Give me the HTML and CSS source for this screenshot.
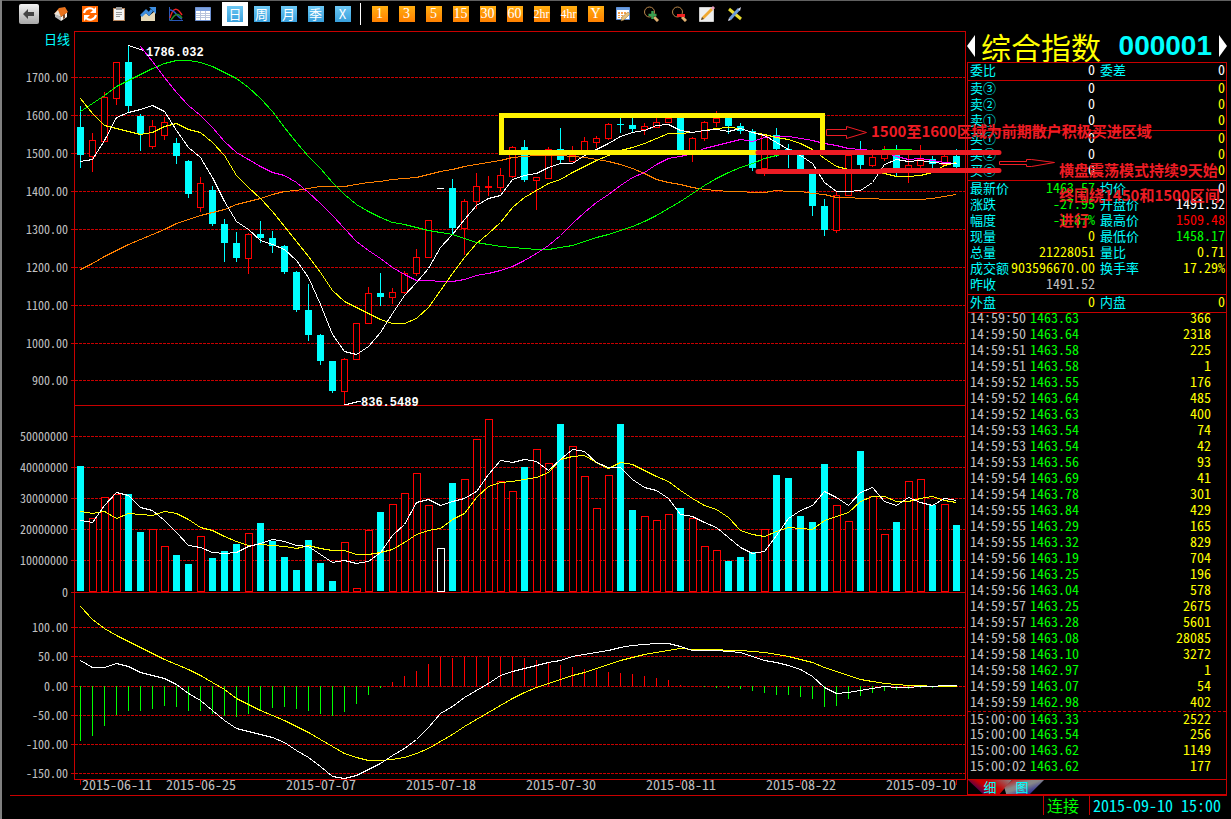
FILE: index.html
```html
<!DOCTYPE html>
<html lang="zh-CN">
<head>
<meta charset="utf-8">
<title>综合指数 000001</title>
<link rel="stylesheet" href="styles.css">
</head>
<body class="app">
<header class="toolbar">
  <button class="back" aria-label="返回"><svg width="12" height="10" viewBox="0 0 12 10"><path d="M0 5 5 0V3H11V7H5V10Z" fill="#444"/></svg></button>
  <button class="tool wide" aria-label="主页"><svg width="16" height="16" viewBox="0 0 16 16"><path d="M2 8 8 11V15L2 11Z" fill="#bbb"/><path d="M8 11 14 6V11L8 15Z" fill="#f5efe6"/><path d="M1 8 6 2 12 1 15 6 8 11 5 6Z" fill="#e8721c"/><path d="M1 8 5 4 8 11Z" fill="#e9e2d8"/><path d="M10 9 12 8V12L10 13Z" fill="#7b4a2a"/></svg></button>
  <button class="tool wide" aria-label="刷新"><svg width="16" height="16" viewBox="0 0 16 16"><path d="M0 0H16V16H0Z" fill="#f60"/><path d="M2 7C3 2 9 1 12 4M14 9C13 14 7 15 4 12" fill="none" stroke="#fff" stroke-width="2"/><path d="M14 1V7H8ZM2 15V9H8Z" fill="#fff"/></svg></button>
  <button class="tool wide" aria-label="剪贴板"><svg width="14" height="16" viewBox="0 0 14 16"><path d="M1 2H13V15H1Z" fill="#b5835a"/><path d="M2 3H12V14H2Z" fill="#f4f4f4"/><path d="M4 1H10V4H4Z" fill="#999"/><path d="M4 6.500H10M4 8.500H10M4 10.500H8" stroke="#999"/></svg></button>
  <button class="tool wide" aria-label="走势"><svg width="16" height="16" viewBox="0 0 16 16"><path d="M1 10 6 7 9 10 15 5V15H1Z" fill="#e6d9b8"/><path d="M1 10 6 5 9 8 12 4" fill="none" stroke="#3d8de0" stroke-width="3"/><path d="M9 1H16V8Z" fill="#3d8de0"/></svg></button>
  <button class="tool" aria-label="指标"><svg width="16" height="16" viewBox="0 0 16 16"><path d="M1.500 1V14.500H15" fill="none" stroke="#2958b8"/><path d="M2 12C5 1 9 1 14 9" fill="none" stroke="#e22" stroke-width="1.500"/><path d="M2 4C7 4 9 11 14 13" fill="none" stroke="#2857c8" stroke-width="1.500"/><path d="M3 14C7 8 10 6 14 12" fill="none" stroke="#2a8a2a" stroke-width="1.500"/></svg></button>
  <button class="tool" aria-label="列表"><svg width="16" height="14" viewBox="0 0 16 14"><path d="M.5.5H15.500V13.500H.5Z" fill="#fff" stroke="#6b8fd0"/><path d="M1 1H15V4H1Z" fill="#7ea2e0"/><path d="M1 6.500H15M1 8.500H15M1 10.500H15M5.500 4V13M10.500 4V13" stroke="#b8c4dc"/></svg></button>
  <button class="tool selected"><span class="key blue">日</span></button>
  <button class="tool"><span class="key blue">周</span></button>
  <button class="tool"><span class="key blue">月</span></button>
  <button class="tool"><span class="key blue">季</span></button>
  <button class="tool"><span class="key blue">X</span></button>
  <span class="separator"></span>
  <button class="tool"><span class="key orange">1</span></button>
  <button class="tool"><span class="key orange">3</span></button>
  <button class="tool"><span class="key orange">5</span></button>
  <button class="tool"><span class="key orange">15</span></button>
  <button class="tool"><span class="key orange">30</span></button>
  <button class="tool"><span class="key orange">60</span></button>
  <button class="tool"><span class="key orange small">2hr</span></button>
  <button class="tool"><span class="key orange small">4hr</span></button>
  <button class="tool"><span class="key orange">Y</span></button>
  <button class="tool mid" aria-label="编辑表"><svg width="16" height="16" viewBox="0 0 16 16"><path d="M1.500 1.500H14.500V13.500H1.500Z" fill="#fff" stroke="#5b8fd8"/><path d="M2 2H14V4H2Z" fill="#6a9ce0"/><path d="M3 6H11V12H3Z" fill="#f6a04c"/><path d="M3 8.500H11M3 10.500H11M5.500 6V12M8.500 6V12" stroke="#fff"/><path d="M6 15 7 11 13 6 15 8 9 14Z" fill="#e8c27a" stroke="#8a6a3a" stroke-width=".5"/></svg></button>
  <button class="tool mid" aria-label="放大"><svg width="16" height="16" viewBox="0 0 16 16"><circle cx="6.500" cy="6" r="5" fill="none" stroke="#b8864a"/><path d="M11 11 15 15" stroke="#e0b070" stroke-width="3"/><path d="M9.500 5V13M5.500 9H13.500" stroke="#3aa050" stroke-width="2.500"/></svg></button>
  <button class="tool mid" aria-label="缩小"><svg width="16" height="16" viewBox="0 0 16 16"><circle cx="6.500" cy="6" r="5" fill="none" stroke="#b8864a"/><path d="M11 11 15 15" stroke="#e0b070" stroke-width="3"/><path d="M6 9.500H14" stroke="#e22" stroke-width="3"/></svg></button>
  <button class="tool mid" aria-label="画线"><svg width="16" height="16" viewBox="0 0 16 16"><path d="M.5 1.500H14.500V15.500H.5Z" fill="#eee" stroke="#ccc"/><path d="M2 14 3 11 12 2 14 4 5 13Z" fill="#f0a830"/><path d="M12 2 14 0 16 2 14 4Z" fill="#e8a0c0"/><path d="M2 14 3 11 5 13Z" fill="#543"/></svg></button>
  <button class="tool mid" aria-label="工具"><svg width="14" height="16" viewBox="0 0 14 16"><path d="M1 3 13 13" stroke="#e8dc30" stroke-width="3"/><path d="M2 13 11 3" stroke="#6a9ad8" stroke-width="3"/><path d="M0 15 1 12 3 14ZM10 3 13 1 12 5Z" fill="#dde"/></svg></button>
</header>

<main class="workspace">
  <section class="chart" aria-label="日线图">
    <svg class="plot" id="plot" viewBox="2 30 965 766"></svg>
    <svg class="notes" viewBox="2 30 965 766">
      <rect class="zone" x="501.500" y="115.500" width="321" height="37"/>
      <path class="band" d="M758 152.500H999M758 171.500H880L884 170.500H999"/>
      <path class="arrow" d="M826.500 129.500H846.500V126.500L866.500 132.500 846.500 138.500V135.500H826.500Z"/>
      <path class="arrow" d="M999.500 161.500H1026.500V159.500H1031.500L1054.500 162.500 1031.500 166.500H1026.500V164.500H999.500Z"/>
      <text class="note" x="871" y="137">1500至1600区域为前期散户积极买进区域</text>
      <text class="note" x="1059" y="176">横盘震荡模式持续9天始</text>
      <text class="note" x="1059" y="201">终围绕1450和1500区间</text>
      <text class="note" x="1059" y="226">进行</text>
    </svg>
  </section>

  <aside class="quote">
    <div class="title">
      <button class="step" aria-label="上一个"><svg width="8" height="22" viewBox="0 0 8 22"><path d="M8 0V22L0 11Z" fill="#fff"/></svg></button>
      <h1 class="name">综合指数</h1><span class="code">000001</span>
      <button class="step" aria-label="下一个"><svg width="8" height="22" viewBox="0 0 8 22"><path d="M0 0V22L8 11Z" fill="#fff"/></svg></button>
    </div>
    <div class="frame">
      <table class="pairs">
        <tbody class="single"><tr><th>委比</th><td>0</td><th>委差</th><td>0</td></tr></tbody>
      </table>
      <table class="pairs">
        <tbody><tr><th>卖③</th><td>0</td><th></th><td class="y">0</td></tr>
        <tr><th>卖②</th><td>0</td><th></th><td class="y">0</td></tr>
        <tr><th>卖①</th><td>0</td><th></th><td class="y">0</td></tr></tbody>
      </table>
      <table class="pairs">
        <tbody><tr><th>买①</th><td>0</td><th></th><td class="y">0</td></tr>
        <tr><th>买②</th><td>0</td><th></th><td class="y">0</td></tr>
        <tr><th>买③</th><td>0</td><th></th><td class="y">0</td></tr></tbody>
      </table>
      <table class="pairs">
        <tbody><tr><th>最新价</th><td class="g">1463.57</td><th>均价</th><td>0</td></tr>
        <tr><th>涨跌</th><td class="g">-27.95</td><th>开盘价</th><td>1491.52</td></tr>
        <tr><th>幅度</th><td class="g">-1.87%</td><th>最高价</th><td class="r">1509.48</td></tr>
        <tr><th>现量</th><td class="y">0</td><th>最低价</th><td class="g">1458.17</td></tr>
        <tr><th>总量</th><td class="y">21228051</td><th>量比</th><td class="y">0.71</td></tr>
        <tr><th>成交额</th><td class="y">903596670.00</td><th>换手率</th><td class="y">17.29%</td></tr>
        <tr><th>昨收</th><td class="s">1491.52</td><th></th><td></td></tr></tbody>
      </table>
      <table class="pairs">
        <tbody class="single"><tr><th>外盘</th><td class="y">0</td><th>内盘</th><td class="y">0</td></tr></tbody>
      </table>
      <div class="ticks"><table class="trades"><tbody id="trades"></tbody></table></div>
      <div class="tabs"><button class="tab first">细</button><button class="tab second">图</button></div>
    </div>
  </aside>
</main>

<footer class="status"><span class="link">连接</span><time class="clock">2015-09-10 15:00</time></footer>
<script src="chart.js"></script>
</body>
</html>
```
FILE: styles.css
```css
* { box-sizing: border-box; }

.app {
  margin: 0;
  min-height: 100vh;
  display: flex;
  flex-direction: column;
  background: #000;
  border-left: 2px solid #808080;
  color: #fff;
  font-family: "Noto Sans CJK SC", sans-serif;
  font-feature-settings: "hwid";
  font-size: 14px;
  overflow-x: hidden;
}

button {
  margin: 0;
  padding: 0;
  border: 0;
  background: none;
  color: inherit;
  font: inherit;
}

/* toolbar */
.toolbar {
  display: flex;
  align-items: center;
  height: 30px;
  padding: 0 0 3px 17px;
  border-top: 1px solid #606060;
}
.toolbar svg { display: block; }
.back {
  display: flex;
  align-items: center;
  justify-content: center;
  width: 20px;
  height: 20px;
  margin-right: 7px;
  border-radius: 2px;
  background: linear-gradient(#f2f2f2, #a8a8a8);
}
.tool {
  display: flex;
  flex: none;
  align-items: center;
  justify-content: center;
  width: 27px;
  height: 24px;
}
.wide { width: 29px; }
.mid { width: 28px; }
.selected { width: 26px; margin-left: 6px; background: #fff; }
.key {
  display: block;
  width: 16px;
  height: 16px;
  line-height: 16px;
  text-align: center;
  white-space: nowrap;
  font-feature-settings: normal;
}
.blue {
  background: linear-gradient(#6cc8f4, #38a0dc);
  font-size: 13px;
}
.orange {
  background: linear-gradient(#ffae10, #ff8000);
  font-family: "Liberation Serif", serif;
  font-size: 14px;
}
.small { font-size: 12px; }
.separator { width: 1px; height: 22px; margin: 0 5px 0 4px; background: #fff; }

/* workspace */
.workspace { display: grid; grid-template-columns: minmax(0, 1fr) 264px; }
.chart { position: relative; }
.plot { display: block; width: 100%; shape-rendering: crispEdges; }
.notes {
  position: absolute;
  inset: 0;
  z-index: 2;
  width: 100%;
  overflow: visible;
  pointer-events: none;
}

.rule { fill: none; stroke: #c80000; }
.grid { fill: none; stroke: #c80000; stroke-dasharray: 3 1; }
.axis { fill: #c0c0c0; font-size: 12px; text-anchor: end; }
.date { fill: #c0c0c0; font-size: 14px; }
.period { fill: #0ff; font-size: 13px; text-anchor: end; }
.peak { fill: #fff; font: bold 12px "Liberation Mono", monospace; }
.down { fill: #0ff; stroke: none; }
.up { fill: #000; stroke: #f00; }
.flat { fill: #000; stroke: #fff; }
.stick { stroke: #f00; }
.stick-down { stroke: #0ff; }
.hist-down { stroke: #0f0; }
.line { fill: none; }
.white { stroke: #fff; }
.yellow { stroke: #ff0; }
.magenta { stroke: #f0f; }
.green { stroke: #0f0; }
.amber { stroke: #ff8000; }

.zone { fill: none; stroke: #fff200; stroke-width: 5; }
.band { fill: none; stroke: #ed1c24; stroke-width: 5; stroke-linecap: round; }
.arrow { fill: none; stroke: #ed1c24; }
.note { fill: #ed1c24; font-size: 15px; font-weight: bold; font-feature-settings: normal; }

/* quote panel */
.quote { display: flex; flex-direction: column; margin-right: 4px; }
.title { display: flex; align-items: center; height: 32px; }
.step { display: flex; }
.name {
  margin: 0 0 0 6px;
  color: #ff0;
  font-size: 30px;
  font-weight: 400;
  line-height: 30px;
}
.code {
  margin: 0 7px 0 auto;
  color: #0ff;
  font-family: "Liberation Sans", sans-serif;
  font-size: 28px;
  font-weight: bold;
}
.frame { flex: 1; border: solid #c80000; border-width: 1px 1px 2px; }
.pairs {
  display: block;
  border-bottom: 1px solid #c80000;
  border-spacing: 0;
}
.pairs, .trades { white-space: nowrap; }
.pairs tbody { display: block; padding-bottom: 1px; }
.pairs tr { display: grid; grid-template-columns: 42px 86px 44px 1fr; height: 16px; line-height: 13px; }
.pairs .single { padding: 0 0 1px; }
.pairs th { padding: 0 0 0 2px; color: #0ff; font-size: 13px; font-weight: normal; text-align: left; }
.pairs th:nth-child(3) { padding-left: 4px; }
.pairs td { padding: 0 1px 0 0; text-align: right; }
.y { color: #ff0; }
.g { color: #0f0; }
.r { color: #f00; }
.s { color: #c0c0c0; }

.ticks { padding-bottom: 4px; border-bottom: 1px solid #c80000; }
.trades { display: block; margin-top: -2px; border-spacing: 0; }
.trades tbody { display: block; }
.trades tr {
  display: grid;
  grid-template-columns: 60px 60px 1fr;
  height: 16px;
  padding: 0 15px 0 2px;
  line-height: 13px;
}
.trades .close { border-top: 1px dashed #c80000; }
.trades td { padding: 0; }
.trades td:last-child { text-align: right; }

.tabs { display: flex; height: 14px; }
.tab { width: 44px; height: 14px; color: #0ff; font-size: 13px; line-height: 14px; }
.first {
  background: linear-gradient(35deg, #000080 10%, #c80000 45%, #c80000 60%, #888 100%);
  clip-path: polygon(0 0, 100% 0, 72% 100%, 34% 100%);
}
.second {
  margin-left: -12px;
  background: linear-gradient(160deg, #c80000 5%, #888 40%, #888 50%, #0000a0 95%);
  clip-path: polygon(28% 0, 100% 0, 68% 100%, 14% 100%, 10% 55%);
}

/* status bar */
.status {
  display: flex;
  justify-content: flex-end;
  height: 23px;
  padding: 0 10px 4px 0;
  font-size: 16px;
  line-height: 19px;
}
.link { width: 46px; padding-left: 3px; border-left: 1px solid #c80000; color: #0f0; }
.clock { padding-left: 3px; border-left: 1px solid #c80000; color: #0ff; white-space: pre; }
```
FILE: chart.js
```js
const NS = 'http://www.w3.org/2000/svg';
const plot = document.getElementById('plot');

function add(tag, cls, attrs, text) {
  const el = document.createElementNS(NS, tag);
  el.setAttribute('class', cls);
  for (const key in attrs) el.setAttribute(key, attrs[key]);
  if (text) el.textContent = text;
  plot.appendChild(el);
}
const path = (cls, d) => add('path', cls, { d });
const cx = i => 80.5 + i * 12;

/* frame and grid */
function scale(rows) {
  rows.forEach(([y, label]) => {
    path('grid', `M75 ${y + 0.5}H965`);
    path('rule', `M71 ${y + 0.5}H75`);
    add('text', 'axis', { x: 68, y: y + 5 }, label);
  });
}
scale([[77, '1700.00'], [115, '1600.00'], [153, '1500.00'], [191, '1400.00'], [229, '1300.00'],
  [267, '1200.00'], [305, '1100.00'], [343, '1000.00'], [380, '900.00'],
  [436, '50000000'], [467, '40000000'], [498, '30000000'], [529, '20000000'], [560, '10000000'],
  [627, '100.00'], [656, '50.00'], [686, '0.00'], [715, '-50.00'], [744, '-100.00'], [773, '-150.00']]);
add('text', 'axis', { x: 68, y: 597 }, '0');
path('rule', 'M74.5 779.5V31.5H965.5V779.5ZM75 405.5H965M71 592.5H965M10 795.5H967');
add('text', 'period', { x: 70, y: 44 }, '日线');

/* price candles: kind, high, top, bottom, low */
const candles = `d106,127,155,168 u133,140,156,172 u92,97,141,141 u62,62,98,105 d45,62,106,112 d114,116,134,151
u120,126,146,149 u117,122,135,140 d138,143,156,164 d160,161,194,198 u177,183,207,212 d186,190,224,226
d219,224,243,262 d232,243,258,262 u233,234,258,274 d221,234,238,243 d231,238,246,253 d245,246,272,274
d271,272,310,312 d284,310,335,341 d334,335,361,365 d361,361,391,393 u358,359,391,405 u323,323,359,359
u287,293,323,323 d273,293,297,306 u288,292,297,304 u271,273,292,294 u249,257,273,276 u220,220,257,257
f188,188,188,188 d179,188,228,234 u199,201,228,255 u173,186,201,209 u176,186,187,196 u168,175,187,191
u146,147,176,178 d140,147,180,182 u177,177,180,210 u147,149,178,179 d128,149,160,163 u146,155,161,162
u137,141,151,155 u136,138,142,148 u123,124,138,140 d118,124,125,133 d118,125,129,132 u123,126,129,135
u118,122,127,127 u118,118,122,123 d117,117,152,152 u137,138,150,162 u121,122,138,141 u111,118,122,127
d118,118,126,134 d123,126,131,134 d129,131,168,171 u134,135,168,176 d128,135,149,157 d144,149,150,168
d154,155,169,169 d173,174,206,216 d199,206,230,236 u191,195,230,233 u155,155,195,195 d141,154,165,169
u149,157,165,167 u146,154,158,161 d145,154,168,176 u155,165,168,183 u145,159,165,168 d156,159,164,168
u154,156,164,165 d149,156,167,168`.split(/\s+/);
candles.forEach((c, i) => {
  const [high, top, bottom, low] = c.slice(1).split(',').map(Number);
  const x = cx(i);
  if (c[0] === 'f') { path('white', `M${x - 3.5} ${top + 0.5}h7`); return; }
  const up = c[0] === 'u';
  if (high < top) path(up ? 'stick' : 'stick-down', `M${x} ${high}V${top}`);
  if (low > bottom) path(up ? 'stick' : 'stick-down', `M${x} ${bottom}V${low}`);
  if (up) add('rect', 'up', { x: x - 3, y: top + 0.5, width: 6, height: bottom - top });
  else add('rect', 'down', { x: x - 3.5, y: top, width: 7, height: bottom - top });
});

/* volume bars: kind, top */
`d466 u518 u497 u494 d494 d532 u529 u546 d555 d564 u536 d558 d551 d544 u533 d523 d541 d557 d570 d540 d563 d581
u542 u588 u530 d512 u504 u493 u473 u505 f548 d483 u479 u439 u419 u481 u491 d467 u449 u463 d424 u446 u476 u508
u475 d424 d510 u516 u520 u514 d508 u518 u546 u550 d561 d557 d552 u529 d475 d478 d516 d522 d464 u505 u521 d451
u496 u534 d522 u481 u479 d505 u504 d525`.split(/\s+/).forEach((v, i) => {
  const top = Number(v.slice(1));
  if (v[0] === 'd') add('rect', 'down', { x: cx(i) - 3.5, y: top, width: 7, height: 591 - top });
  else add('rect', v[0] === 'u' ? 'up' : 'flat', { x: cx(i) - 3, y: top + 0.5, width: 7, height: 591 - top });
});

/* MACD histogram */
[741, 736, 726, 715, 711, 711, 709, 706, 707, 711, 711, 714, 716, 717, 714, 711, 708, 707, 709, 711, 714, 716,
  712, 704, 695, 688, 682, 676, 671, 664, 657, 658, 657, 657, 657, 657, 657, 658, 660, 663, 665, 667, 669, 670,
  672, 673, 674, 676, 678, 680, 685, 686, 687, 688, 688, 689, 691, 693, 695, 695, 697, 699, 707, 706, 699, 696,
  693, 691, 690, 689, 688, 688, 687, 687].forEach((y, i) => {
  path(y < 687 ? 'stick' : 'hist-down', `M${cx(i)} 686V${y}`);
});

/* lines: class, first index, values */
function line(cls, start, ys) {
  path('line ' + cls, 'M' + ys.map((y, i) => `${cx(i + start)} ${y + 0.5}`).join('L'));
}
line('amber', 0, [269, 263, 256, 250, 244, 239, 234, 229, 223, 219, 215, 212, 209, 204, 201, 198, 194, 191, 190,
  188, 186, 186, 186, 184, 182, 181, 179, 178, 177, 174, 171, 169, 166, 164, 162, 160, 157, 156, 155, 155, 155,
  156, 157, 159, 161, 164, 168, 173, 179, 182, 184, 187, 189, 190, 191, 191, 192, 192, 190, 191, 191, 193, 194,
  197, 197, 198, 198, 199, 199, 199, 199, 198, 196, 194]);
line('green', 0, [111, 103, 95, 86, 80, 74, 68, 63, 60, 60, 62, 66, 72, 78, 87, 98, 111, 127, 142, 156, 168, 182,
  194, 204, 211, 217, 222, 224, 227, 230, 232, 234, 238, 242, 244, 246, 247, 248, 249, 249, 247, 245, 241, 237,
  234, 230, 226, 221, 215, 208, 201, 193, 185, 178, 172, 167, 163, 158, 155, 153, 152, 152, 152, 152, 152, 152,
  152, 149, 149, 149, 151, 152, 152, 152]);
line('magenta', 5, [46, 61, 77, 92, 105, 115, 127, 141, 152, 159, 166, 172, 175, 182, 192, 203, 215, 228, 241,
  250, 258, 267, 274, 280, 280, 281, 281, 279, 275, 273, 270, 266, 260, 253, 245, 235, 223, 212, 202, 194, 185,
  177, 172, 164, 158, 156, 153, 148, 145, 142, 139, 141, 137, 136, 136, 138, 140, 143, 145, 148, 149, 150, 152,
  156, 159, 158, 160, 162, 163]);
line('yellow', 0, [98, 113, 125, 128, 131, 134, 132, 126, 123, 129, 132, 142, 155, 175, 187, 198, 211, 226, 241,
  256, 272, 290, 301, 307, 313, 319, 323, 323, 318, 307, 290, 273, 257, 243, 233, 222, 207, 197, 190, 183, 179,
  172, 166, 160, 155, 150, 147, 143, 138, 133, 133, 132, 130, 128, 127, 128, 132, 134, 137, 139, 143, 149, 158,
  166, 169, 170, 171, 173, 176, 176, 175, 172, 165, 162]);
line('white', 0, [161, 159, 140, 117, 112, 109, 105, 111, 130, 147, 157, 177, 201, 221, 229, 240, 244, 249, 260,
  277, 304, 334, 351, 354, 346, 332, 313, 295, 282, 268, 247, 234, 219, 205, 198, 195, 179, 175, 173, 167, 163,
  163, 155, 149, 143, 136, 132, 130, 125, 124, 130, 132, 130, 129, 131, 128, 132, 135, 142, 149, 155, 163, 182,
  191, 191, 190, 182, 164, 159, 161, 160, 162, 163, 163]);
line('yellow', 0, [511, 513, 511, 518, 513, 514, 515, 511, 513, 519, 527, 530, 536, 541, 545, 544, 545, 546, 548,
  545, 548, 550, 550, 554, 554, 552, 549, 542, 534, 530, 528, 519, 513, 497, 486, 482, 481, 479, 477, 472, 459,
  456, 455, 462, 468, 462, 464, 470, 476, 481, 490, 498, 505, 509, 517, 530, 534, 536, 531, 527, 528, 529, 520,
  516, 512, 501, 496, 496, 501, 501, 498, 496, 500, 502]);
line('white', 0, [520, 522, 505, 492, 495, 507, 510, 520, 532, 545, 547, 552, 553, 552, 546, 543, 539, 541, 545,
  546, 554, 562, 560, 563, 561, 552, 535, 524, 502, 499, 505, 501, 498, 491, 474, 460, 462, 459, 461, 470, 459,
  449, 451, 462, 467, 467, 479, 487, 490, 498, 514, 516, 522, 527, 537, 547, 553, 551, 535, 518, 510, 505, 491,
  497, 505, 492, 487, 501, 505, 497, 502, 505, 498, 500]);
line('yellow', 0, [606, 619, 628, 635, 641, 647, 653, 659, 664, 669, 675, 682, 689, 698, 704, 710, 715, 720, 726,
  732, 739, 746, 753, 757, 760, 760, 759, 757, 753, 748, 741, 734, 726, 719, 712, 705, 698, 692, 687, 683, 679,
  675, 672, 668, 664, 660, 657, 654, 652, 650, 648, 649, 649, 649, 650, 650, 651, 652, 654, 656, 659, 662, 667,
  671, 675, 679, 681, 683, 684, 685, 685, 686, 686, 686]);
line('white', 0, [660, 667, 667, 663, 666, 672, 675, 678, 684, 693, 700, 710, 720, 728, 731, 734, 737, 742, 750,
  757, 766, 776, 778, 775, 769, 763, 755, 748, 739, 727, 713, 706, 697, 690, 683, 675, 671, 668, 665, 662, 660,
  656, 654, 652, 650, 647, 645, 644, 643, 643, 646, 650, 650, 650, 651, 652, 656, 660, 662, 665, 669, 676, 687,
  693, 692, 690, 688, 686, 687, 687, 686, 686, 685, 685]);

/* extremes */
path('white line', 'M128.5 45.5L143.500 50.5M344.500 405L360.500 401');
add('text', 'peak', { x: 146, y: 56 }, '1786.032');
add('text', 'peak', { x: 361, y: 406 }, '836.5489');

/* date axis */
[[80, '2015-06-11', 82], [200, '2015-06-25', 166], [320, '2015-07-07', 286], [440, '2015-07-18', 406],
  [560, '2015-07-30', 526], [680, '2015-08-11', 646], [800, '2015-08-22', 766], [956, '2015-09-10', 886]]
  .forEach(([x, label, start]) => {
    path('rule', `M${x + 0.5} 780V785`);
    add('text', 'date', { x: start, y: 790 }, label);
  });

/* trade ticks */
document.getElementById('trades').innerHTML = `14:59:50 1463.63 366|14:59:50 1463.64 2318|14:59:51 1463.58 225
14:59:51 1463.58 1|14:59:52 1463.55 176|14:59:52 1463.64 485|14:59:52 1463.63 400|14:59:53 1463.54 74
14:59:53 1463.54 42|14:59:53 1463.56 93|14:59:54 1463.69 41|14:59:54 1463.78 301|14:59:55 1463.84 429
14:59:55 1463.29 165|14:59:55 1463.32 829|14:59:56 1463.19 704|14:59:56 1463.25 196|14:59:56 1463.04 578
14:59:57 1463.25 2675|14:59:57 1463.28 5601|14:59:58 1463.08 28085|14:59:58 1463.10 3272|14:59:58 1462.97 1
14:59:59 1463.07 54|14:59:59 1462.98 402|15:00:00 1463.33 2522|15:00:00 1463.54 256|15:00:00 1463.62 1149
15:00:02 1463.62 177`.split(/[|\n]/).map((row, i) => {
    const [time, price, volume] = row.split(' ');
    return `<tr${i === 25 ? ' class="close"' : ''}><td class="s">${time}</td><td class="g">${price}</td><td class="y">${volume}</td></tr>`;
  }).join('');
```
